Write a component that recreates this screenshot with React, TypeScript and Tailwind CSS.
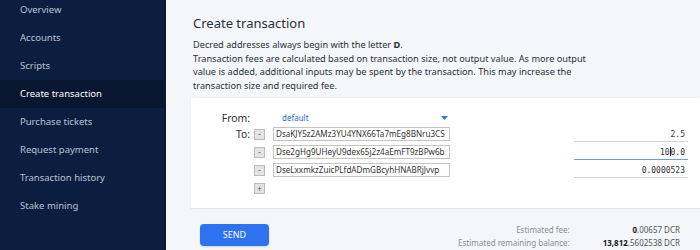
import React from "react";

const NAV_ITEMS = [
  "Overview",
  "Accounts",
  "Scripts",
  "Create transaction",
  "Purchase tickets",
  "Request payment",
  "Transaction history",
  "Stake mining",
];

interface Output {
  address: string;
  amount: string;
  focused?: boolean;
}

const OUTPUTS: Output[] = [
  { address: "DsaKJY5z2AMz3YU4YNX66Ta7mEg8BNru3CS", amount: "2.5" },
  { address: "Dse2gHg9UHeyU9dex65j2z4aEmFT9zBPw6b", amount: "100.0", focused: true },
  { address: "DseLxxmkzZuicPLfdADmGBcyhHNABRjJvvp", amount: "0.0000523" },
];

function Sidebar() {
  return (
    <aside className="w-[166px] shrink-0 border-r-2 border-[#0a1a36] bg-[#0c1e3f]">
      <nav className="-mt-[4px] flex flex-col">
        {NAV_ITEMS.map((item) => {
          const active = item === "Create transaction";
          return (
            <div
              key={item}
              className={`flex h-[28px] items-center pl-[20px] text-[9.5px] ${
                active ? "bg-[#08162f] text-white" : "text-[#b8c3d5]"
              }`}
            >
              {item}
            </div>
          );
        })}
      </nav>
    </aside>
  );
}

function SmallButton({ label }: { label: string }) {
  return (
    <div className="flex h-[11px] w-[11px] items-center justify-center border border-[#bcbcbc] bg-[#e3e3e3] text-[8px] leading-none text-[#555]">
      {label}
    </div>
  );
}

export default function App() {
  return (
    <div className="flex h-[250px] w-[700px] overflow-hidden font-['Noto_Sans',sans-serif] text-[#2d3036]">
      <Sidebar />
      <main className="flex flex-1 flex-col bg-[#f4f6f9]">
        <div className="pl-[27px] pt-[14px]">
          <h1 className="text-[13px] leading-[18px] text-[#2b2e33]">Create transaction</h1>
          <div className="mt-[6px] w-[405px] text-[9.2px] leading-[13.5px]">
            <p>
              Decred addresses always begin with the letter <b>D</b>.
            </p>
            <p>
              Transaction fees are calculated based on transaction size, not output value. As more
              output value is added, additional inputs may be spent by the transaction. This may
              increase the transaction size and required fee.
            </p>
          </div>
        </div>

        <section className="ml-[25px] mt-[6px] h-[111px] border-b border-[#e3e6ea] bg-white pt-[13px] shadow-[0_0_2px_rgba(0,0,0,0.05)]">
          {/* From row */}
          <div className="flex h-[14px] items-center">
            <div className="w-[59px] text-right text-[10.4px] leading-none">From:</div>
            <div className="ml-[23px] flex w-[176px] items-center justify-between pl-[9px] pr-[1px]">
              <span className="text-[8px] leading-none text-[#2f6ccc]">default</span>
              <svg width="7" height="4" viewBox="0 0 7 4">
                <path d="M0 0h7L3.5 4z" fill="#3b74d4" />
              </svg>
            </div>
          </div>

          {/* To rows */}
          <div className="mt-[2px] flex flex-col gap-[4px]">
            {OUTPUTS.map((out, i) => (
              <div key={out.address} className="flex h-[14px] items-center">
                <div className="w-[59px] text-right text-[10.4px] leading-none">
                  {i === 0 ? "To:" : ""}
                </div>
                <div className="ml-[4px]">
                  <SmallButton label="-" />
                </div>
                <div className="ml-[8px] flex h-[14px] w-[177px] items-center overflow-hidden whitespace-nowrap border border-[#c4c4c4] bg-white px-[2px] text-[8.1px] leading-none text-[#333]">
                  {out.address}
                </div>
                <div
                  className={`ml-[124px] flex h-[15px] w-[114px] items-end justify-end self-start border-b pb-[2px] pr-[3px] font-['DejaVu_Sans_Mono',monospace] text-[8px] leading-none text-[#333] ${
                    out.focused ? "border-[#6b9de0]" : "border-[#d2d2d2]"
                  }`}
                >
                  {out.focused ? (
                    <span>
                      10
                      <span className="inline-block h-[9px] w-px translate-y-[1px] bg-[#222]" />
                      0.0
                    </span>
                  ) : (
                    out.amount
                  )}
                </div>
              </div>
            ))}
          </div>

          {/* add output */}
          <div className="ml-[63px] mt-[6px]">
            <SmallButton label="+" />
          </div>
        </section>

        <footer className="flex items-start pl-[34px] pt-[15px]">
          <button className="h-[22px] w-[69px] rounded-[4px] bg-[#2e72f0] text-[9px] text-white shadow-[0_1px_2px_rgba(0,0,0,0.15)]">
            SEND
          </button>
          <div className="ml-auto mr-[20px] mt-[-1px] grid grid-cols-[auto_auto] gap-x-[33px] text-[8px] leading-[13px]">
            <span className="text-right text-[#8b8f95]">Estimated fee:</span>
            <span className="text-right text-[#555]">
              <b className="text-[#222]">0</b>.00657 DCR
            </span>
            <span className="text-right text-[#8b8f95]">Estimated remaining balance:</span>
            <span className="text-right text-[#555]">
              <b className="text-[#222]">13,812</b>.5602538 DCR
            </span>
          </div>
        </footer>
      </main>
    </div>
  );
}
